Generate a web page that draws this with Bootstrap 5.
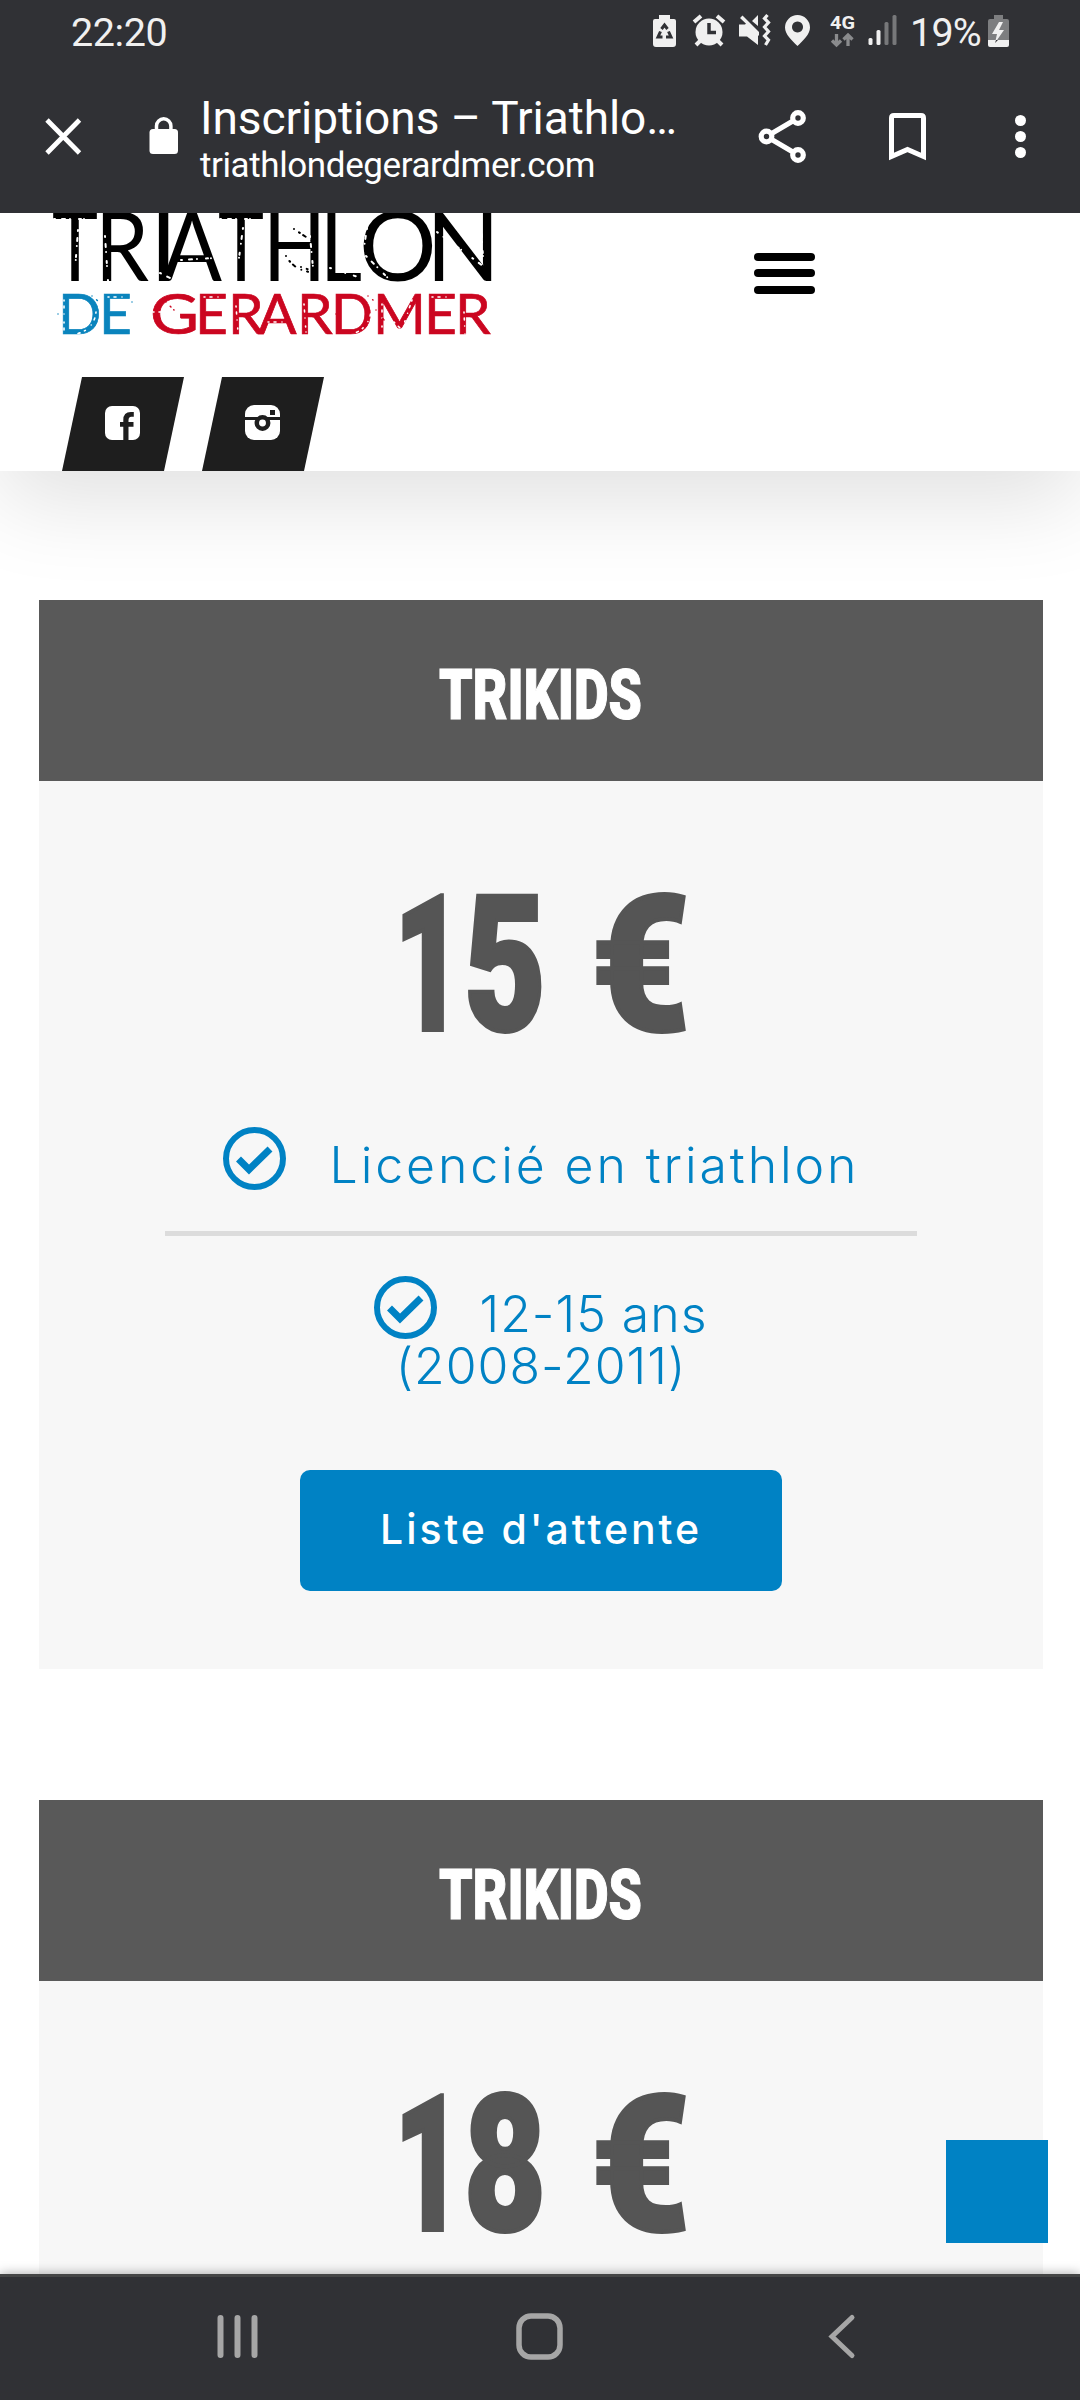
<!DOCTYPE html>
<html lang="fr">
<head>
<meta charset="utf-8">
<meta name="viewport" content="width=device-width, initial-scale=1">
<title>Inscriptions – Triathlon de Gérardmer</title>
<link rel="stylesheet" href="https://cdn.jsdelivr.net/npm/bootstrap@5.3.0/dist/css/bootstrap.min.css">
<style>
body{width:1080px;height:2400px;overflow:hidden;background:#fff;font-family:Roboto,sans-serif}
svg{display:block;flex:none;overflow:visible}
.screen{height:2400px}
.chrome{height:213px;background:#303135;color:#fff;z-index:3}
.status{height:62px;padding:0 71px 0 71px;color:#f0f0f0}
.clock{font-size:39.5px;line-height:65px;letter-spacing:-.4px}
.pct{font-size:39.5px;line-height:65px;letter-spacing:-.8px;width:78px;margin-left:13px}
.bar{height:151px;padding:0 54px 0 46px}
.titles{width:400px;margin-left:22px;padding-top:27px}
.page-title{font-size:46px;line-height:58px;letter-spacing:-.05px}
.page-url{font-size:35px;line-height:38px;letter-spacing:-.4px}
.site-head{height:258px;background:#fff;box-shadow:0 30px 90px 0 rgba(0,0,0,.12);z-index:2}
.brand-row{height:164px;padding:0 265px 0 53px}
.burger{width:61px;margin-top:40px}
.socials{padding-left:62px;gap:18px}
.social-tile{width:122px;height:94px;background:#1e1e1e;clip-path:polygon(20px 0,100% 0,102px 100%,0 100%)}
.content{padding:129px 37px 0 39px;gap:131px;overflow:hidden}
.price-box{height:1069px;background:#f7f7f7;flex:none}
.price-head{height:181px;background:#595959}
.price-list{font-family:Inter,sans-serif;font-weight:300;color:#0082c4;font-size:50px;line-height:52px;letter-spacing:1px}
.first-line{height:200px;padding-top:96px;gap:44px}
.second-line{height:92px;padding-top:40px;gap:42px}
.lic,.age{padding-top:12px}
.lic{letter-spacing:2.9px}
.years{margin-top:12px}
.rule{width:752px;height:5px;background:#dcdcdc}
.wait-btn{width:482px;height:121px;margin-top:78px;border-radius:10px;background:#0082c4;color:#fff;font:500 41px/119px Inter,sans-serif;padding:0;border:0;letter-spacing:2.9px}
.to-top{position:absolute;left:946px;top:2140px;width:102px;height:103px;background:#0082c4;z-index:2}
.navkeys{height:126px;background:#303135;border-top:3px solid #454646;box-shadow:0 0 11px rgba(0,0,0,.35);z-index:3;padding:38px 225px 0 217px}
.home-key{margin-right:9px}
</style>
<script src="https://cdn.jsdelivr.net/npm/bootstrap@5.3.0/dist/js/bootstrap.bundle.min.js"></script>
</head>
<body>
<div class="screen d-flex flex-column position-relative">
  <header class="chrome flex-shrink-0 position-relative">
    <div class="status d-flex justify-content-between">
      <span class="clock">22:20</span>
      <div class="d-flex">
        <svg width="244" height="62" viewBox="653 0 244 62" fill="#f0f0f0">
          <path d="M659 15h11v4h4a2 2 0 0 1 2 2v23a3 3 0 0 1-3 3h-17a3 3 0 0 1-3-3V21a2 2 0 0 1 2-2h4z"/>
          <g stroke="#303135" stroke-width="3" fill="none"><path d="M661.500 29l3-4 3 4M668.500 31.500l2.500 5.500h-5M662.500 37H658l2.500-5.500"/></g>
          <circle cx="709" cy="32" r="13.500"/><path d="M709 23v9.500h7" stroke="#303135" stroke-width="3.500" fill="none"/><path d="M694 22l7-6M724 22l-7-6M700 41l-4 4M718 41l4 4" stroke="#f0f0f0" stroke-width="4"/>
          <path d="M739 24.500h6l2-2L758 33v12l-11-8.500h-8zM752 21l6-6v11zM740 18l2.500-2.500L759 32v4z"/>
          <path d="M767.500 15l-3 3.500 4 4-4 4.500 4 4.500-4 4.500 4 4-3 5" stroke="#f0f0f0" stroke-width="3.200" fill="none"/>
          <path fill-rule="evenodd" d="M797.500 15a12.500 12.500 0 0 1 12.500 12.500c0 7-7 13-12.500 18.500C792 40.500 785 34.500 785 27.500A12.500 12.500 0 0 1 797.500 15zm0 6.500a5.500 5.500 0 1 0 .01 0z"/>
          <text x="830" y="29" font-size="19" font-weight="700" textLength="25" lengthAdjust="spacingAndGlyphs">4G</text>
          <path d="M836.500 34v11M832 40.500l4.500 4.500 4.500-4.500M848 46V35M843.500 39.500L848 35l4.500 4.500" stroke="#8a8b8d" stroke-width="3.300" fill="none"/>
          <rect x="868.500" y="38" width="4" height="7" rx="1.500"/><rect x="876.500" y="30" width="4" height="15" rx="1.500"/><rect x="884.500" y="22" width="4" height="23" rx="1.500" fill="#77787a"/><rect x="892.500" y="15" width="4" height="30" rx="1.500" fill="#77787a"/>
        </svg>
        <span class="pct">19%</span>
        <svg width="21" height="62" viewBox="988 0 21 62"><path d="M994 15h9v4h4a2 2 0 0 1 2 2v20h-21V21a2 2 0 0 1 2-2h4z" fill="#7d7e80"/><path d="M988 40h21v5a2 2 0 0 1-2 2h-17a2 2 0 0 1-2-2z" fill="#f0f0f0"/><path d="M999 22l-7 12h5l-2 9 9-13h-5l4-8z" fill="#f0f0f0"/><path d="M995 43l1-3h2z" fill="#303135"/></svg>
      </div>
    </div>
    <div class="bar d-flex">
      <svg width="132" height="151" viewBox="46 62 132 151" fill="#fff"><path d="M47 120l32.500 33M79.500 120L47 153" stroke="#fff" stroke-width="4.800"/><rect x="149.500" y="129" width="28.500" height="25" rx="3.500"/><path d="M156.500 131v-5a7.200 7.200 0 0 1 14.400 0v5" fill="none" stroke="#fff" stroke-width="3.500"/></svg>
      <div class="titles text-nowrap"><div class="page-title">Inscriptions – Triathlo…</div><div class="page-url">triathlondegerardmer.com</div></div>
      <svg class="ms-auto" width="267" height="151" viewBox="759 62 267 151" fill="none" stroke="#fff"><path d="M798 118l-31.500 18.500L798 155" stroke-width="5"/><g stroke-width="5.200" fill="#303135"><circle cx="798" cy="118" r="5.300"/><circle cx="766.500" cy="136.500" r="5.300"/><circle cx="798" cy="155" r="5.300"/></g><path d="M891.500 156.500V118q0-2.500 2.500-2.500h27q2.500 0 2.500 2.500v38.500l-16-7z" stroke-width="5"/><g fill="#fff" stroke="none"><circle cx="1020.500" cy="120.500" r="5.500"/><circle cx="1020.500" cy="136.500" r="5.500"/><circle cx="1020.500" cy="152.500" r="5.500"/></g></svg>
    </div>
  </header>

  <section class="site-head flex-shrink-0 position-relative">
    <div class="brand-row d-flex justify-content-between">
      <svg width="440" height="130" viewBox="53 213 440 130" font-family="Lato,sans-serif">
        <text y="281" font-size="97"><tspan x="52" textLength="46" lengthAdjust="spacingAndGlyphs">T</tspan><tspan x="95" textLength="54" lengthAdjust="spacingAndGlyphs">R</tspan><tspan x="150">I</tspan><tspan x="162" textLength="60" lengthAdjust="spacingAndGlyphs">A</tspan><tspan x="218" textLength="46" lengthAdjust="spacingAndGlyphs">T</tspan><tspan x="263" textLength="63" lengthAdjust="spacingAndGlyphs">H</tspan><tspan x="320" textLength="42" lengthAdjust="spacingAndGlyphs">L</tspan><tspan x="359">O</tspan><tspan x="426">N</tspan></text>
        <g font-size="57" stroke-width=".7">
        <text y="334" fill="#0a84bd" stroke="#0a84bd"><tspan x="58">D</tspan><tspan x="99">E</tspan></text>
        <text y="334" fill="#cb0620" stroke="#cb0620"><tspan x="150" textLength="49" lengthAdjust="spacingAndGlyphs">G</tspan><tspan x="195">E</tspan><tspan x="228">R</tspan><tspan x="258">A</tspan><tspan x="297">R</tspan><tspan x="331" textLength="42" lengthAdjust="spacingAndGlyphs">D</tspan><tspan x="373">M</tspan><tspan x="424">E</tspan><tspan x="455">R</tspan></text>
        </g>
        <g fill="none" stroke="#fff" stroke-linecap="round">
          <path stroke-width="2" stroke-dasharray="1 7 3 5 0 9 2 3 0 14" d="M54 219h40M78 230l-3 40M105 236l3 45M160 273l10 5M181 260l33-2M220 219h43M243 228l-4 30M310 236l4 42M330 268l28 9M366 256l26 26M408 222l8 10M437 232l46 34M481 226l2 30M367 228l-4 26"/>
          <path stroke-width="1.600" stroke-dasharray="1 5 2 6 0 8" d="M64 300v32M96 312q-2 18-20 22M108 297h18M153 312h12M180 306l-10 20M204 297h18M236 306l2 26M268 322h20M304 304l2 28M371 308q0 18-16 25M382 304v28M394 322l8 8M412 300l-8 24M432 297h18M464 312l1 22"/>
        </g>
        <g fill="none" stroke-linecap="round" stroke-dasharray="0 6 1 4 3 7">
          <path stroke="#000" stroke-width="2" d="M294 229l18 12M286 256q8 14 24 16M301 267l9 3"/>
          <path stroke="#cb0620" stroke-width="1.500" d="M166 302l8 8M336 314h-6M376 310l8 10M368 296l5 4"/>
          <path stroke="#0a84bd" stroke-width="1.500" d="M58 314l5 3M92 296l6 5M132 302l3 2"/>
        </g>
      </svg>
      <svg class="burger" height="41" viewBox="0 0 61 41"><rect width="61" height="8" rx="4"/><rect y="16" width="61" height="8" rx="4"/><rect y="33" width="61" height="8" rx="4"/></svg>
    </div>
    <div class="socials d-flex">
      <a class="social-tile" href="#" aria-label="Facebook"><svg width="122" height="94" viewBox="62 377 122 94"><rect x="105" y="406" width="35" height="34" rx="7" fill="#fff"/><path d="M123.300 441V420q0-8 7.500-8h3v4.800h-2.500q-2.800 0-2.800 3.500V441zM120 422h13.500v4.800H120z" fill="#1e1e1e"/></svg></a>
      <a class="social-tile" href="#" aria-label="Instagram"><svg width="122" height="94" viewBox="202 377 122 94"><rect x="245" y="405" width="35" height="35" rx="9" fill="#fff"/><path d="M245 417h35v3h-35zM270 410h5v5h-5z" fill="#1e1e1e"/><circle cx="262.500" cy="423" r="5.700" fill="#fff" stroke="#1e1e1e" stroke-width="4.500"/></svg></a>
    </div>
  </section>

  <main class="content flex-grow-1 d-flex flex-column">
    <section class="price-box d-flex flex-column align-items-center">
      <h3 class="price-head w-100 m-0 d-flex justify-content-center"><svg width="202" height="181" viewBox="440 600 202 181" fill="#fff" stroke="#fff" stroke-width="1.200"><text x="439" y="718.500" font-size="71" font-weight="900" textLength="203" lengthAdjust="spacingAndGlyphs">TRIKIDS</text></svg></h3>
      <svg width="288" height="250" viewBox="396 781 288 250" fill="#555" stroke="#555" stroke-width="4"><text y="1029.500" font-size="190" font-weight="900" xml:space="preserve"><tspan x="393" textLength="69" lengthAdjust="spacingAndGlyphs">1</tspan><tspan x="463" textLength="82" lengthAdjust="spacingAndGlyphs">5</tspan><tspan x="546"> </tspan><tspan x="590" textLength="99" lengthAdjust="spacingAndGlyphs">€</tspan></text></svg>
      <div class="price-list d-flex flex-column align-items-center w-100">
        <div class="d-flex align-items-start first-line"><svg class="tick" width="63" height="63" viewBox="0 0 63 63" fill="none" stroke="#0082c4"><circle cx="31.500" cy="31.500" r="28.500" stroke-width="6"/><path d="M15.500 32l10.500 10.500L47 22" stroke-width="7"/></svg><span class="lic">Licencié en triathlon</span></div>
        <div class="rule"></div>
        <div class="d-flex align-items-start second-line"><svg class="tick" width="63" height="63" viewBox="0 0 63 63" fill="none" stroke="#0082c4"><circle cx="31.500" cy="31.500" r="28.500" stroke-width="6"/><path d="M15.500 32l10.500 10.500L47 22" stroke-width="7"/></svg><span class="age">12-15 ans</span></div>
        <div class="years">(2008-2011)</div>
      </div>
      <a class="btn wait-btn" href="#">Liste d'attente</a>
    </section>
    <section class="price-box d-flex flex-column align-items-center">
      <h3 class="price-head w-100 m-0 d-flex justify-content-center"><svg width="202" height="181" viewBox="440 600 202 181" fill="#fff" stroke="#fff" stroke-width="1.200"><text x="439" y="718.500" font-size="71" font-weight="900" textLength="203" lengthAdjust="spacingAndGlyphs">TRIKIDS</text></svg></h3>
      <svg width="288" height="250" viewBox="396 781 288 250" fill="#555" stroke="#555" stroke-width="4"><text y="1029.500" font-size="190" font-weight="900" xml:space="preserve"><tspan x="393" textLength="69" lengthAdjust="spacingAndGlyphs">1</tspan><tspan x="463" textLength="82" lengthAdjust="spacingAndGlyphs">8</tspan><tspan x="546"> </tspan><tspan x="590" textLength="99" lengthAdjust="spacingAndGlyphs">€</tspan></text></svg>
    </section>
  </main>
  <a class="to-top" href="#" aria-label="Haut de page"></a>

  <footer class="navkeys flex-shrink-0 position-relative d-flex justify-content-between">
    <svg width="42" height="46" viewBox="0 0 42 46" stroke="#a6a6a6" stroke-width="6" stroke-linecap="round"><path d="M3.500 3v37M20.500 3v37M37.500 3v37"/></svg>
    <svg class="home-key" width="47" height="46" viewBox="0 0 47 46" fill="none" stroke="#a6a6a6" stroke-width="5.500"><rect x="3" y="1" width="41" height="41" rx="12"/></svg>
    <svg width="27" height="46" viewBox="0 0 27 46" fill="none" stroke="#a6a6a6" stroke-width="5" stroke-linecap="round"><path d="M24 2.500L4 21.500l20 19"/></svg>
  </footer>
</div>
</body>
</html>
